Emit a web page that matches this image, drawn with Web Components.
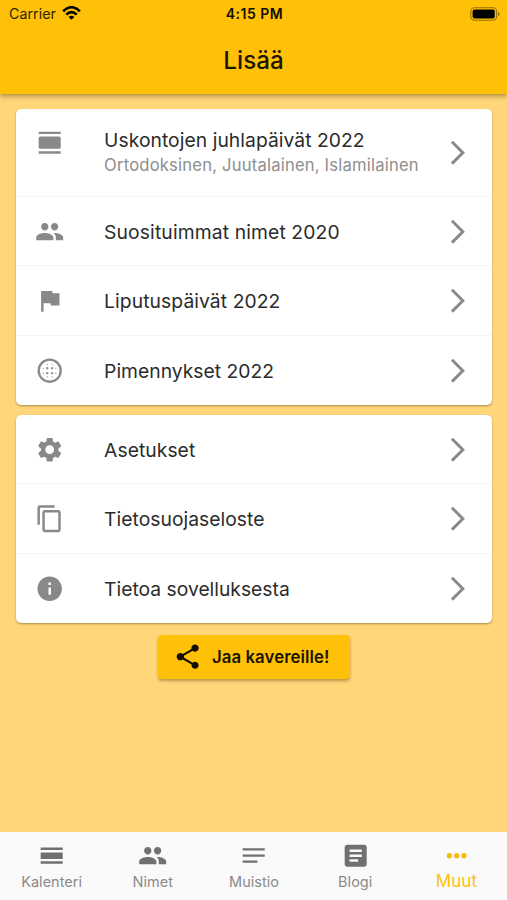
<!DOCTYPE html>
<html lang="fi">
<head>
<meta charset="utf-8">
<title>Lisää</title>
<style>
html,body{margin:0;padding:0;height:100%}
body{font-family:Inter,"Liberation Sans",sans-serif;overflow:hidden}
</style>
</head>
<body>
<more-screen></more-screen>
<script>
const ICONS = {
  day: '<path d="M3 3h18v2H3zM3 19h18v2H3z"/><rect x="3" y="7" width="18" height="10" rx="1.3"/>',
  people: '<path d="M16 11c1.66 0 2.99-1.34 2.99-3S17.66 5 16 5c-1.66 0-3 1.34-3 3s1.34 3 3 3zm-8 0c1.66 0 2.99-1.34 2.99-3S9.66 5 8 5C6.34 5 5 6.34 5 8s1.34 3 3 3zm0 2c-2.33 0-7 1.17-7 3.5V19h14v-2.5c0-2.33-4.67-3.5-7-3.5zm8 0c-.29 0-.62.02-.97.05 1.16.84 1.97 1.97 1.97 3.45V19h6v-2.5c0-2.33-4.67-3.5-7-3.5z"/>',
  flag: '<path d="M14.4 6L14 4H5v17h2v-7h5.6l.4 2h7V6z"/>',
  moon: '<circle cx="12" cy="12" r="9" fill="none" stroke="currentColor" stroke-width="1.9"/>' +
    [[10,10],[14,10],[10,14],[14,14]].map(p => `<circle cx="${p[0]}" cy="${p[1]}" r=".95"/>`).join('') +
    [[10,7],[14,7],[7,10],[7,14],[17,10],[17,14],[10,17],[14,17]].map(p => `<circle cx="${p[0]}" cy="${p[1]}" r=".5"/>`).join(''),
  gear: '<path d="M19.14 12.94c.04-.3.06-.61.06-.94 0-.32-.02-.64-.07-.94l2.03-1.58c.18-.14.23-.41.12-.61l-1.92-3.32c-.12-.22-.37-.29-.59-.22l-2.39.96c-.5-.38-1.03-.7-1.62-.94l-.36-2.54c-.04-.24-.24-.41-.48-.41h-3.84c-.24 0-.43.17-.47.41l-.36 2.54c-.59.24-1.13.57-1.62.94l-2.39-.96c-.22-.08-.47 0-.59.22L2.74 8.87c-.12.21-.08.47.12.61l2.03 1.58c-.05.3-.09.63-.09.94s.02.64.07.94l-2.03 1.58c-.18.14-.23.41-.12.61l1.92 3.32c.12.22.37.29.59.22l2.39-.96c.5.38 1.03.7 1.62.94l.36 2.54c.05.24.24.41.48.41h3.84c.24 0 .44-.17.47-.41l.36-2.54c.59-.24 1.13-.56 1.62-.94l2.39.96c.22.08.47 0 .59-.22l1.92-3.32c.12-.22.07-.47-.12-.61l-2.01-1.58zM12 15.6c-1.98 0-3.6-1.62-3.6-3.6s1.62-3.6 3.6-3.6 3.6 1.62 3.6 3.6-1.62 3.6-3.6 3.6z"/>',
  copy: '<path d="M16 1H4c-1.1 0-2 .9-2 2v14h2V3h12V1zm3 4H8c-1.1 0-2 .9-2 2v14c0 1.1.9 2 2 2h11c1.1 0 2-.9 2-2V7c0-1.1-.9-2-2-2zm0 16H8V7h11v14z"/>',
  info: '<path d="M12 2C6.48 2 2 6.48 2 12s4.48 10 10 10 10-4.48 10-10S17.52 2 12 2zm1 15h-2v-6h2v6zm0-8h-2V7h2v2z"/>',
  share: '<path d="M18 16.08c-.76 0-1.44.3-1.96.77L8.91 12.7c.05-.23.09-.46.09-.7s-.04-.47-.09-.7l7.05-4.11c.54.5 1.25.81 2.04.81 1.66 0 3-1.34 3-3s-1.34-3-3-3-3 1.34-3 3c0 .24.04.47.09.7L8.04 9.81C7.5 9.31 6.79 9 6 9c-1.66 0-3 1.34-3 3s1.34 3 3 3c.79 0 1.5-.31 2.04-.81l7.12 4.16c-.05.21-.08.43-.08.65 0 1.61 1.31 2.92 2.92 2.92s2.92-1.31 2.92-2.92-1.31-2.92-2.92-2.92z"/>',
  calendar: '<path d="M3 5.4h18v2H3zM3 9.4h18v5.2H3zM3 16.6h18v2H3z"/>',
  notes: '<path d="M3 6h18v1.8H3zM3 11h18v1.8H3zM3 16h12v1.8H3z"/>',
  article: '<path d="M19 3H5c-1.1 0-2 .9-2 2v14c0 1.1.9 2 2 2h14c1.1 0 2-.9 2-2V5c0-1.1-.9-2-2-2zm-5 14H7v-2h7v2zm3-4H7v-2h10v2zm0-4H7V7h10v2z"/>',
  more: '<circle cx="6" cy="12" r="2.1"/><circle cx="12" cy="12" r="2.1"/><circle cx="18" cy="12" r="2.1"/>',
  chevron: '<path d="M7 3.1l8.9 8.9L7 20.9" fill="none" stroke="currentColor" stroke-width="2.4" transform="translate(.3 0)"/>'
};
function define(name, render) {
  customElements.define(name, class extends HTMLElement {
    connectedCallback() {
      if (!this.shadowRoot) this.attachShadow({mode: 'open'}).innerHTML = render(this);
    }
  });
}
define('md-icon', el => `<style>:host{display:block;width:29.4px;height:29.4px;flex:none}svg{display:block;width:100%;height:100%;fill:currentColor}</style><svg viewBox="0 0 24 24">${ICONS[el.getAttribute('name')]}</svg>`);

define('status-bar', () => `<style>
:host{display:grid;grid-template-columns:1fr auto 1fr;align-items:center;height:27px;padding:0 7px 0 9px;font-size:14.2px;color:#2c2300}
.l{display:flex;align-items:center;gap:6px;letter-spacing:.05px}
b{font-weight:600;font-size:14px;letter-spacing:.5px;color:#120e00}
.r{justify-self:end}svg{display:block}
.w{margin-top:-2px}
</style>
<div class="l"><span>Carrier</span><svg class="w" width="19" height="14" viewBox="0 0 19 14" fill="none" stroke="#000" stroke-width="2.7"><path d="M1.2 5.3C6-.1 13-.1 17.8 5.3M4.3 8.6c3-3.2 7.4-3.2 10.4 0"/><path d="M9.5 13.8L6.6 10.9c1.7-1.5 4.1-1.5 5.8 0z" fill="#000" stroke="none"/></svg></div>
<b>4:15 PM</b>
<svg class="r" width="30" height="14" viewBox="0 0 30 14"><rect x=".8" y=".8" width="25.8" height="12.4" rx="3.6" fill="none" stroke="#967100" stroke-width="1.1"/><rect x="2.6" y="2.6" width="22.2" height="8.8" rx="1.8"/><path d="M28 4.9c2 .6 2 3.6 0 4.2z" fill="#967100"/></svg>`);

define('app-header', () => `<style>
:host{display:block;height:94px;background:#ffc107;box-shadow:0 2px 5px rgba(90,60,0,.5);position:relative}
h1{margin:0;height:67px;display:flex;align-items:center;justify-content:center;font-size:24.2px;font-weight:500;color:#1d1700}
</style><status-bar></status-bar><h1><slot></slot></h1>`);

define('menu-card', () => `<style>
:host{display:block;background:#fff;border-radius:5px;box-shadow:0 1px 2px rgba(90,70,20,.5);overflow:hidden}
</style><slot></slot>`);

define('menu-row', el => `<style>
:host{display:flex;align-items:center;box-sizing:border-box;height:69.5px;padding:1.4px 20px 0 19.3px;color:#2b2b2b;font-size:19.3px}
:host(:not(:last-child)){border-bottom:1px solid #f5f5f5}
:host([tall]){height:88px}
.t{flex:1;margin-left:39.4px;white-space:nowrap;line-height:25px;padding-top:1px;letter-spacing:var(--ls,.25px)}
md-icon{color:#898989}
:host([tall]) .i{align-self:flex-start;margin-top:17.6px}
::slotted(small){display:block;font-size:16.6px;color:#8e8e8e;letter-spacing:var(--sub,.2px)}
</style><md-icon class="i" name="${el.getAttribute('icon')}"></md-icon><div class="t"><slot></slot></div><md-icon name="chevron"></md-icon>`);

define('share-button', () => `<style>
:host{display:flex;align-items:center;box-sizing:border-box;width:192px;height:44px;padding-left:15px;gap:9.5px;background:#ffc107;border-radius:4px;box-shadow:0 2px 3px rgba(90,60,0,.4);color:#1a1400;font-size:16.8px;font-weight:600;white-space:nowrap;letter-spacing:.08px}
md-icon{color:#120e00}
</style><md-icon name="share"></md-icon><slot></slot>`);

define('tab-item', el => `<style>
:host{flex:1;display:flex;flex-direction:column;align-items:center;padding-top:9px;color:#8a8a8a;font-size:14.5px}
md-icon{color:#707070}
.l{height:22px;line-height:23px;letter-spacing:.02px}
:host([active]){color:#ffc107;font-size:17px}
:host([active]) md-icon{color:#f9b90a}
</style><md-icon name="${el.getAttribute('icon')}"></md-icon><div class="l"><slot></slot></div>`);

define('tab-bar', () => `<style>:host{display:flex;height:68px;padding-left:1px;background:#fafafa}</style><slot></slot>`);

define('more-screen', () => `<style>
:host{display:flex;flex-direction:column;width:507px;height:900px;background:#ffd67a}
main{flex:1;display:flex;flex-direction:column;padding:14.6px 15px 0 16px}
menu-card+menu-card{margin-top:9.5px}
share-button{margin:12px 0 0 142px}
</style>
<app-header>Lisää</app-header>
<main>
<menu-card>
<menu-row tall icon="day" style="--ls:.05px">Uskontojen juhlapäivät 2022<small>Ortodoksinen, Juutalainen, Islamilainen</small></menu-row>
<menu-row icon="people" style="--ls:.13px">Suosituimmat nimet 2020</menu-row>
<menu-row icon="flag" style="--ls:.08px">Liputuspäivät 2022</menu-row>
<menu-row icon="moon" style="--ls:.02px">Pimennykset 2022</menu-row>
</menu-card>
<menu-card>
<menu-row icon="gear" style="--ls:.05px">Asetukset</menu-row>
<menu-row icon="copy" style="--ls:.03px">Tietosuojaseloste</menu-row>
<menu-row icon="info" style="--ls:0px">Tietoa sovelluksesta</menu-row>
</menu-card>
<share-button>Jaa kavereille!</share-button>
</main>
<tab-bar>
<tab-item icon="calendar">Kalenteri</tab-item>
<tab-item icon="people">Nimet</tab-item>
<tab-item icon="notes">Muistio</tab-item>
<tab-item icon="article">Blogi</tab-item>
<tab-item active icon="more">Muut</tab-item>
</tab-bar>`);
</script>
</body>
</html>
